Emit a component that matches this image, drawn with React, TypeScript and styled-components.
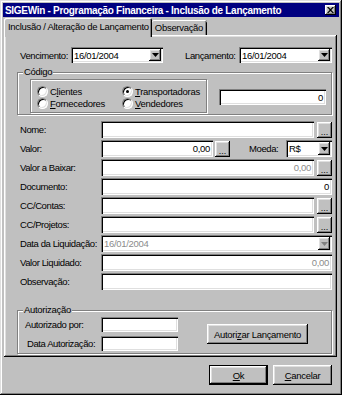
import styled, { createGlobalStyle } from "styled-components";

const GlobalStyle = createGlobalStyle`
  body {
    margin: 0;
    background: #c0c0c0;
  }
  * {
    box-sizing: border-box;
  }
`;

const sunken = `
  background: #fff;
  box-shadow: inset 1px 1px #808080, inset 2px 2px #000, inset -1px -1px #fff, inset -2px -2px #dfdfdf;
`;

const raised = `
  background: #c0c0c0;
  box-shadow: inset -1px -1px #000, inset 1px 1px #fff, inset -2px -2px #808080, inset 2px 2px #dfdfdf;
`;

const Window = styled.div`
  width: 342px;
  height: 395px;
  padding: 3px;
  display: flex;
  flex-direction: column;
  background: #c0c0c0;
  box-shadow: inset -1px -1px #000, inset 1px 1px #dfdfdf, inset -2px -2px #808080, inset 2px 2px #fff;
  font-family: "Liberation Sans", Arial, sans-serif;
  font-size: 9.5px;
  letter-spacing: -0.3px;
  color: #000;
`;

const TitleBar = styled.div`
  height: 14px;
  display: flex;
  align-items: center;
  padding: 0 3px 0 2px;
  background: #000080;
  color: #fff;
  font-weight: bold;
  font-size: 10px;
  letter-spacing: -0.3px;
  white-space: nowrap;
`;

const CloseButton = styled.div`
  margin-left: auto;
  width: 11px;
  height: 10px;
  display: flex;
  align-items: center;
  justify-content: center;
  ${raised}
`;

const Body = styled.div`
  flex: 1;
  display: flex;
  flex-direction: column;
  padding: 1px 2px 0 1px;
`;

const TabStrip = styled.div`
  height: 17px;
  display: flex;
  align-items: flex-end;
`;

const Tab = styled.div<{ $active?: boolean }>`
  position: relative;
  z-index: ${(p) => (p.$active ? 1 : 0)};
  height: ${(p) => (p.$active ? "19px" : "15px")};
  margin-bottom: ${(p) => (p.$active ? "-2px" : "0")};
  padding: ${(p) => (p.$active ? "0 3px 2px 4px" : "0 4px 0 3px")};
  display: flex;
  align-items: center;
  white-space: nowrap;
  background: #c0c0c0;
  border-radius: 2px 2px 0 0;
  box-shadow: ${(p) =>
    p.$active
      ? "inset 1px 1px #fff, inset -1px 0 #000, inset -2px 0 #808080"
      : "inset 0 1px #fff, inset -1px 0 #000, inset -2px 0 #808080"};
`;

const Panel = styled.div`
  height: 322px;
  display: flex;
  flex-direction: column;
  padding-top: 12px;
  ${raised}
`;

const TopRow = styled.div`
  height: 16px;
  display: flex;
  align-items: center;
  padding-left: 16px;
`;

const Label = styled.span<{ $w: number; $ml?: number; $indent?: number }>`
  flex: none;
  width: ${(p) => p.$w}px;
  margin-left: ${(p) => p.$ml ?? 0}px;
  padding-left: ${(p) => p.$indent ?? 0}px;
  white-space: nowrap;
  letter-spacing: -0.4px;
`;

const Field = styled.div<{ $w: number; $right?: boolean; $disabled?: boolean }>`
  flex: none;
  width: ${(p) => p.$w}px;
  height: 100%;
  display: flex;
  align-items: center;
  justify-content: ${(p) => (p.$right ? "flex-end" : "flex-start")};
  padding: 2px ${(p) => (p.$right ? "3px" : "2px")} 2px 3px;
  color: ${(p) => (p.$disabled ? "#8c8c8c" : "#000")};
  white-space: nowrap;
  ${sunken}
`;

const ComboText = styled.span`
  flex: 1;
`;

const DropButton = styled.div`
  width: 12px;
  height: 100%;
  display: flex;
  align-items: center;
  justify-content: center;
  ${raised}
`;

const DotsButton = styled.div<{ $ml: number }>`
  flex: none;
  width: 15px;
  height: 16px;
  margin-left: ${(p) => p.$ml}px;
  display: flex;
  align-items: flex-end;
  justify-content: center;
  padding-bottom: 3px;
  font-size: 9px;
  line-height: 6px;
  letter-spacing: 0;
  ${raised}
`;

const Group = styled.fieldset<{ $mt: number }>`
  width: 315px;
  margin: ${(p) => p.$mt}px 0 0 13px;
  padding: 0;
  min-width: 0;
  border: 1px solid #808080;
  box-shadow: 1px 1px 0 #fff, inset 1px 1px 0 #fff;
`;

const Legend = styled.legend`
  margin-left: 5px;
  padding: 0 1px;
  height: 12px;
  line-height: 12px;
  background: #c0c0c0;
`;

const CodeBody = styled.div`
  display: flex;
  align-items: flex-start;
  padding: 1px 0 1px 12px;
`;

const RadioBox = styled.div`
  width: 177px;
  height: 34px;
  border: 1px solid #808080;
  box-shadow: 1px 1px 0 #fff, inset 1px 1px 0 #fff;
`;

const RadioGrid = styled.div`
  display: grid;
  grid-template-columns: 85px auto;
  grid-auto-rows: 12px;
  padding: 5px 0 0 6px;
`;

const RadioItem = styled.label`
  display: flex;
  align-items: center;
  gap: 2px;
  white-space: nowrap;
`;

const RadioDot = styled.span<{ $checked?: boolean }>`
  flex: none;
  width: 11px;
  height: 11px;
  border-radius: 50%;
  display: flex;
  align-items: center;
  justify-content: center;
  background: #fff;
  border: 1px solid;
  border-color: #808080 #fff #fff #808080;
  box-shadow: inset 1px 1px #000, inset -1px -1px #dfdfdf;
  &::after {
    content: "";
    width: 3px;
    height: 3px;
    border-radius: 50%;
    background: ${(p) => (p.$checked ? "#000" : "transparent")};
  }
`;

const CodeField = styled(Field)`
  height: 16px;
  margin: 10px 0 0 12px;
`;

const FormRows = styled.div`
  display: flex;
  flex-direction: column;
  gap: 2px;
  margin-top: 6px;
  padding-left: 16px;
`;

const FormRow = styled.div`
  height: 17px;
  display: flex;
  align-items: center;
`;

const AuthBody = styled.div`
  display: flex;
  align-items: center;
  padding: 1px 0 2px 7px;
`;

const AuthRows = styled.div`
  display: flex;
  flex-direction: column;
  gap: 4px;
`;

const AuthRow = styled.div`
  height: 15px;
  display: flex;
  align-items: center;
`;

const Button = styled.div<{ $w: number; $ml?: number; $default?: boolean }>`
  flex: none;
  width: ${(p) => p.$w}px;
  height: 20px;
  margin-left: ${(p) => p.$ml ?? 0}px;
  display: flex;
  align-items: center;
  justify-content: center;
  white-space: nowrap;
  ${raised}
  ${(p) =>
    p.$default &&
    `box-shadow: inset 0 0 0 1px #000, inset -2px -2px #000, inset 2px 2px #fff, inset -3px -3px #808080, inset 3px 3px #dfdfdf;`}
`;

const Footer = styled.div`
  display: flex;
  justify-content: flex-end;
  gap: 5px;
  margin-top: 8px;
  padding-right: 5px;
`;

const Arrow = ({ disabled }: { disabled?: boolean }) => (
  <svg width="7" height="4" viewBox="0 0 7 4">
    <path d="M0 0h7L3.5 4z" fill={disabled ? "#808080" : "#000"} />
  </svg>
);

const Combo = ({
  w,
  value,
  disabled,
}: {
  w: number;
  value: string;
  disabled?: boolean;
}) => (
  <Field $w={w} $disabled={disabled}>
    <ComboText>{value}</ComboText>
    <DropButton>
      <Arrow disabled={disabled} />
    </DropButton>
  </Field>
);

const Radio = ({
  checked,
  children,
}: {
  checked?: boolean;
  children: React.ReactNode;
}) => (
  <RadioItem>
    <RadioDot $checked={checked} />
    <span>{children}</span>
  </RadioItem>
);

const App = () => {
  return (
    <>
      <GlobalStyle />
      <Window>
        <TitleBar>
          SIGEWin - Programação Financeira - Inclusão de Lançamento
          <CloseButton>
            <svg width="7" height="6" viewBox="0 0 7 6">
              <path d="M0 0h1.5L3.5 2 5.5 0H7L4.3 3 7 6H5.5L3.5 4 1.5 6H0l2.7-3z" fill="#000" />
            </svg>
          </CloseButton>
        </TitleBar>

        <Body>
          <TabStrip>
            <Tab $active>Inclusão / Alteração de Lançamento</Tab>
            <Tab>Observação</Tab>
          </TabStrip>

          <Panel>
            <TopRow>
              <Label $w={51}>Vencimento:</Label>
              <Combo w={92} value="16/01/2004" />
              <Label $w={54} $ml={22}>
                Lançamento:
              </Label>
              <Combo w={93} value="16/01/2004" />
            </TopRow>

            <Group $mt={3}>
              <Legend>Código</Legend>
              <CodeBody>
                <RadioBox>
                  <RadioGrid>
                    <Radio>
                      C<u>l</u>ientes
                    </Radio>
                    <Radio checked>
                      <u>T</u>ransportadoras
                    </Radio>
                    <Radio>
                      <u>F</u>ornecedores
                    </Radio>
                    <Radio>
                      <u>V</u>endedores
                    </Radio>
                  </RadioGrid>
                </RadioBox>
                <CodeField $w={107} $right>
                  0
                </CodeField>
              </CodeBody>
            </Group>

            <FormRows>
              <FormRow>
                <Label $w={81}>Nome:</Label>
                <Field $w={213} />
                <DotsButton $ml={3}>...</DotsButton>
              </FormRow>
              <FormRow>
                <Label $w={81}>Valor:</Label>
                <Field $w={112} $right>
                  0,00
                </Field>
                <DotsButton $ml={2}>...</DotsButton>
                <Label $w={37} $ml={19}>
                  Moeda:
                </Label>
                <Combo w={46} value="R$" />
              </FormRow>
              <FormRow>
                <Label $w={81}>Valor a Baixar:</Label>
                <Field $w={213} $right $disabled>
                  0,00
                </Field>
                <DotsButton $ml={3}>...</DotsButton>
              </FormRow>
              <FormRow>
                <Label $w={81}>Documento:</Label>
                <Field $w={231} $right>
                  0
                </Field>
              </FormRow>
              <FormRow>
                <Label $w={81}>CC/Contas:</Label>
                <Field $w={213} />
                <DotsButton $ml={3}>...</DotsButton>
              </FormRow>
              <FormRow>
                <Label $w={81}>CC/Projetos:</Label>
                <Field $w={213} />
                <DotsButton $ml={3}>...</DotsButton>
              </FormRow>
              <FormRow>
                <Label $w={81}>Data da Liquidação:</Label>
                <Combo w={231} value="16/01/2004" disabled />
              </FormRow>
              <FormRow>
                <Label $w={81}>Valor Liquidado:</Label>
                <Field $w={231} $right $disabled>
                  0,00
                </Field>
              </FormRow>
              <FormRow>
                <Label $w={81}>Observação:</Label>
                <Field $w={231} />
              </FormRow>
            </FormRows>

            <Group $mt={14}>
              <Legend>Autorização</Legend>
              <AuthBody>
                <AuthRows>
                  <AuthRow>
                    <Label $w={76}>Autorizado por:</Label>
                    <Field $w={77} />
                  </AuthRow>
                  <AuthRow>
                    <Label $w={76} $indent={2}>
                      Data Autorização:
                    </Label>
                    <Field $w={77} />
                  </AuthRow>
                </AuthRows>
                <Button $w={101} $ml={29}>
                  Autori<u>z</u>ar Lançamento
                </Button>
              </AuthBody>
            </Group>
          </Panel>

          <Footer>
            <Button $w={59} $default>
              <u>O</u>k
            </Button>
            <Button $w={59}>
              <u>C</u>ancelar
            </Button>
          </Footer>
        </Body>
      </Window>
    </>
  );
};

export default App;
